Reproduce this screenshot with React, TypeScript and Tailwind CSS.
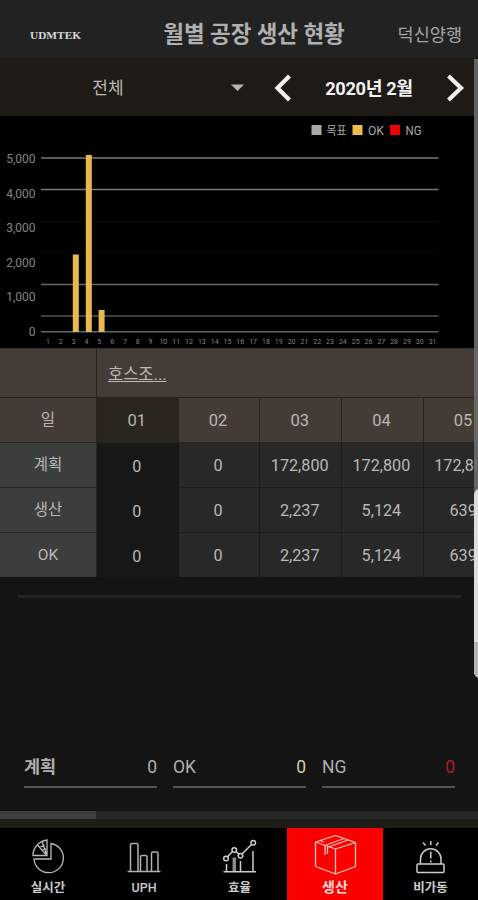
const yLabels = [
  { text: "5,000", y: 163 },
  { text: "4,000", y: 198 },
  { text: "3,000", y: 232 },
  { text: "2,000", y: 266.5 },
  { text: "1,000", y: 301 },
  { text: "0", y: 336 },
];

const gridLines = [
  { y: 158, color: "#777777" },
  { y: 189.5, color: "#777777" },
  { y: 221.5, color: "#0b0b0b" },
  { y: 252.5, color: "#070707" },
  { y: 284.5, color: "#666666" },
  { y: 316, color: "#555555" },
  { y: 331.7, color: "#666666" },
];

const bars = [
  { x: 72.8, y: 254.5 },
  { x: 85.8, y: 155 },
  { x: 98.6, y: 310 },
];

const days = Array.from({ length: 31 }, (_, i) => i + 1);

const columns = ["01", "02", "03", "04", "05"];

const rows = [
  { name: "계획", values: ["0", "0", "172,800", "172,800", "172,800"] },
  { name: "생산", values: ["0", "0", "2,237", "5,124", "639"] },
  { name: "OK", values: ["0", "0", "2,237", "5,124", "639"] },
];

const totals = [
  { label: "계획", value: "0", labelClass: "font-bold", color: "text-[#b0b0b0]" },
  { label: "OK", value: "0", labelClass: "", color: "text-[#d2d09a]" },
  { label: "NG", value: "0", labelClass: "", color: "text-[#b51c22]" },
];

const Header = () => {
  return (
    <header className="flex h-[58px] shrink-0 items-center bg-[#222222] pt-3">
      <div className="w-[112px] pl-[30px]">
        <svg width="52" height="14" viewBox="0 0 52 14">
          <text
            x="0"
            y="11"
            textLength="51"
            lengthAdjust="spacingAndGlyphs"
            className="fill-[#d8d8d8] font-['Liberation_Serif',serif] text-[10.5px] font-bold"
          >
            UDMTEK
          </text>
        </svg>
      </div>
      <h1 className="w-[284px] text-center text-[22.500px] font-bold tracking-[-0.1px] whitespace-nowrap text-[#b0b0b0]">
        월별 공장 생산 현황
      </h1>
      <span className="flex w-[66px] justify-end text-[17.500px] whitespace-nowrap text-[#a5a5a5]">덕신양행</span>
    </header>
  );
};

const Filter = () => {
  return (
    <div className="flex h-[59px] shrink-0 items-center border-b border-black bg-[#1e1b17]">
      <div className="w-[216px] pt-1 text-center text-[17px] text-[#bcb7b2]">전체</div>
      <svg width="58" height="30" viewBox="216 72.500 58 30">
        <path d="M231 85h13l-6.500 6.500z" fill="#b9b5b0" />
      </svg>
      <svg width="20" height="30" viewBox="274 72 20 30">
        <path d="M289.500 76 277.500 88l12 12" fill="none" stroke="#f2f0ee" strokeWidth="4.200" />
      </svg>
      <div className="w-[150px] pt-1 text-center text-[18.300px] font-bold tracking-[-0.4px] whitespace-nowrap text-[#f2f2f2]">
        2020년 2월
      </div>
      <svg width="22" height="30" viewBox="444 72 22 30">
        <path d="M448.500 76 461 88l-12.500 12" fill="none" stroke="#f2f0ee" strokeWidth="4.200" />
      </svg>
    </div>
  );
};

const Chart = () => {
  return (
    <svg width="478" height="231" viewBox="0 117 478 231" className="block shrink-0 bg-black">
      {/* Legend */}
      <g fontSize="12" fill="#a8a8a8">
        <rect x="311.500" y="125" width="10" height="10" fill="#a8aaa8" />
        <text x="326.500" y="134.500" textLength="20" lengthAdjust="spacingAndGlyphs">목표</text>
        <rect x="352.500" y="125" width="10" height="10" fill="#efbb4a" />
        <text x="368" y="134.500" textLength="16" lengthAdjust="spacingAndGlyphs">OK</text>
        <rect x="390" y="125" width="10" height="10" fill="#f00000" />
        <text x="405.500" y="134.500" textLength="16" lengthAdjust="spacingAndGlyphs">NG</text>
      </g>

      {gridLines.map((line) => (
        <line key={line.y} x1="41" x2="438.500" y1={line.y} y2={line.y} stroke={line.color} strokeWidth="1.500" />
      ))}

      {yLabels.map((label) => (
        <text key={label.text} x="35.500" y={label.y} textAnchor="end" fontSize="12" fill="#858585">
          {label.text}
        </text>
      ))}

      {bars.map((bar) => (
        <rect key={bar.x} x={bar.x} y={bar.y} width="6" height={332 - bar.y} fill="#e9b94f" />
      ))}

      {days.map((day) => (
        <text key={day} x={48 + (day - 1) * 12.82} y="343.500" textAnchor="middle" fontSize="7" fill="#858585">
          {day}
        </text>
      ))}
    </svg>
  );
};

const Table = () => {
  return (
    <div className="h-[229px] shrink-0 overflow-hidden bg-[#141414] text-[15.500px] text-[#b8b8b8]">
      <div className="flex h-[50px] border-y border-b-[#292320] border-t-[#34302b] bg-[#443c37]">
        <div className="w-[97px] shrink-0 border-r border-[#292320]" />
        <div className="flex items-center pt-1 pl-[11px] text-[16.500px] text-[#c0b8b3] underline">호스조...</div>
      </div>
      <div className="flex h-[45px] w-[506px] border-b border-[#292320] bg-[#443b37] text-[#bdb4af]">
        <div className="flex w-[97px] shrink-0 items-center justify-center border-r border-[#292320] pt-0.5">일</div>
        {columns.map((col, i) => (
          <div
            key={col}
            className={`flex w-[81.700px] shrink-0 items-center justify-center pt-0.5 pr-0.5 text-[16.500px] ${
              i === 0 ? "bg-[#2a261f]" : "border-r border-[#292320]"
            }`}
          >
            {col}
          </div>
        ))}
      </div>
      {rows.map((row) => (
        <div key={row.name} className="flex h-[45px] w-[506px]">
          <div className="flex w-[97px] shrink-0 items-center justify-center border-r border-b border-[#252525] bg-[#3c3d3d] pt-0.5">
            {row.name}
          </div>
          {row.values.map((value, i) => (
            <div
              key={i}
              className={`flex w-[81.700px] shrink-0 items-center justify-center pt-[3px] pr-0.5 text-[16.200px] ${
                i === 0 ? "bg-[#171717]" : "border-r border-b border-[#1c1c1c] bg-[#282828]"
              }`}
            >
              {value}
            </div>
          ))}
        </div>
      ))}
    </div>
  );
};

const Totals = () => {
  return (
    <div className="flex flex-1 flex-col bg-[#141414]">
      <div className="mt-[18px] mr-[17px] ml-[18px] h-[3px] bg-[#252525]" />
      <div className="mt-auto mb-[23px] flex gap-4 px-6">
        {totals.map((item) => (
          <div
            key={item.label}
            className="flex h-[37px] w-[133px] shrink-0 justify-between border-b-2 border-[#515459] pt-0.5 text-[17.500px] leading-[28px] text-[#b0b0b0]"
          >
            <span className={item.labelClass}>{item.label}</span>
            <span className={item.color}>{item.value}</span>
          </div>
        ))}
      </div>
      <div className="h-[8px] bg-[#272725]">
        <div className="h-full w-24 bg-[#3e3e3e]" />
      </div>
      <div className="h-[9px] bg-[#1e1c17]" />
    </div>
  );
};

const TabBar = () => {
  return (
    <nav className="flex h-[72px] shrink-0 bg-black text-[12.500px] font-bold text-[#cccccc]">
      <div className="flex w-24 flex-col items-center">
        <svg width="96" height="51" viewBox="0 828 96 51" fill="none" stroke="#b8b8b8" strokeWidth="1.300">
          <path d="M51 843.500a14.700 14.700 0 1 1-17 15.500h17z" />
          <path d="M47 855.500H33c0-7.500 5-14 14-15.500zM47 855.500l-10-11M47 855.500l-5-14M39.500 847.500l5-2.500M42 850.500l4-2" />
        </svg>
        <span className="leading-[18px]">실시간</span>
      </div>
      <div className="flex w-24 flex-col items-center">
        <svg width="96" height="51" viewBox="96 828 96 51" fill="none" stroke="#b0b0b0" strokeWidth="1.500">
          <path d="M127.500 871.500h33M130.500 871v-26q0-1.500 1.500-1.500h4.500q1.500 0 1.500 1.500v26M140.500 871v-14q0-1.500 1.500-1.500h3.500q1.500 0 1.500 1.500v14M151.500 871v-17.500q0-1.500 1.500-1.500h3.500q1.500 0 1.500 1.500V871" />
        </svg>
        <span className="font-medium leading-[18px]">UPH</span>
      </div>
      <div className="flex w-[95px] flex-col items-center">
        <svg width="95" height="51" viewBox="192 828 95 51" fill="none" stroke="#cccccc" strokeWidth="1.500">
          <path d="M223.500 871.800h32.500M226.500 871v-7M240.500 871v-10M253 871v-20" />
          <path d="M234.300 871v-13.500" stroke="#8c8c8c" strokeWidth="3.500" />
          <path d="m227.500 856.700 5-5.200M236 851.500l3 3M242 854l9.500-9.500" />
          <circle cx="226" cy="858.500" r="2.300" />
          <circle cx="234.300" cy="850" r="2.300" />
          <circle cx="240.500" cy="855.800" r="2.300" />
          <circle cx="253.300" cy="842.800" r="2.300" />
        </svg>
        <span className="leading-[18px]">효율</span>
      </div>
      <div className="flex w-24 flex-col items-center bg-[#fc0000] text-[14px] text-[#f3dada]">
        <svg width="96" height="51" viewBox="287 828 96 51" fill="none" stroke="#f3c6c0" strokeWidth="1.300" strokeLinejoin="round">
          <path d="m315.500 842 20-6.500 20 7v24l-20 7.500-20-7.500zM315.500 842l20 7 20-6.500M335.500 849v25" />
          <path d="m325 845.500 19-7M328.500 847l19.500-7M320 840.500l4 1.500M325 845.500v9.500M327.500 847v7" />
        </svg>
        <span className="leading-[17px]">생산</span>
      </div>
      <div className="flex w-[95px] flex-col items-center">
        <svg width="95" height="51" viewBox="383.500 828 95 51" fill="none" stroke="#cccccc" strokeWidth="1.500">
          <rect x="417.500" y="864" width="27" height="8.500" rx="1" />
          <path d="M421 864v-5a10.200 10.200 0 0 1 20.500 0v5" />
          <path d="M431.300 851.500v7M431.300 860.500v2M431.300 841v4M423.500 842.500l2.500 3M439 842.500l-2.500 3" />
        </svg>
        <span className="leading-[18px]">비가동</span>
      </div>
    </nav>
  );
};

const App = () => {
  return (
    <div className="relative flex h-[900px] w-[478px] flex-col overflow-hidden bg-[#141414] font-[Roboto,'Noto_Sans_CJK_KR',sans-serif]">
      <Header />
      <Filter />
      <Chart />
      <Table />
      <Totals />
      <TabBar />

      {/* Scroll strip over the right edge */}
      <div className="absolute top-[59px] right-0 h-[440px] w-1 bg-[#6b6b6b]/90" />
      <div className="absolute top-[489px] left-[474px] h-[189px] w-3 overflow-hidden rounded-l-md bg-[#dedede]">
        <div className="mt-[153px] h-9 bg-[#b4b4b4]" />
      </div>
    </div>
  );
};

export default App;
